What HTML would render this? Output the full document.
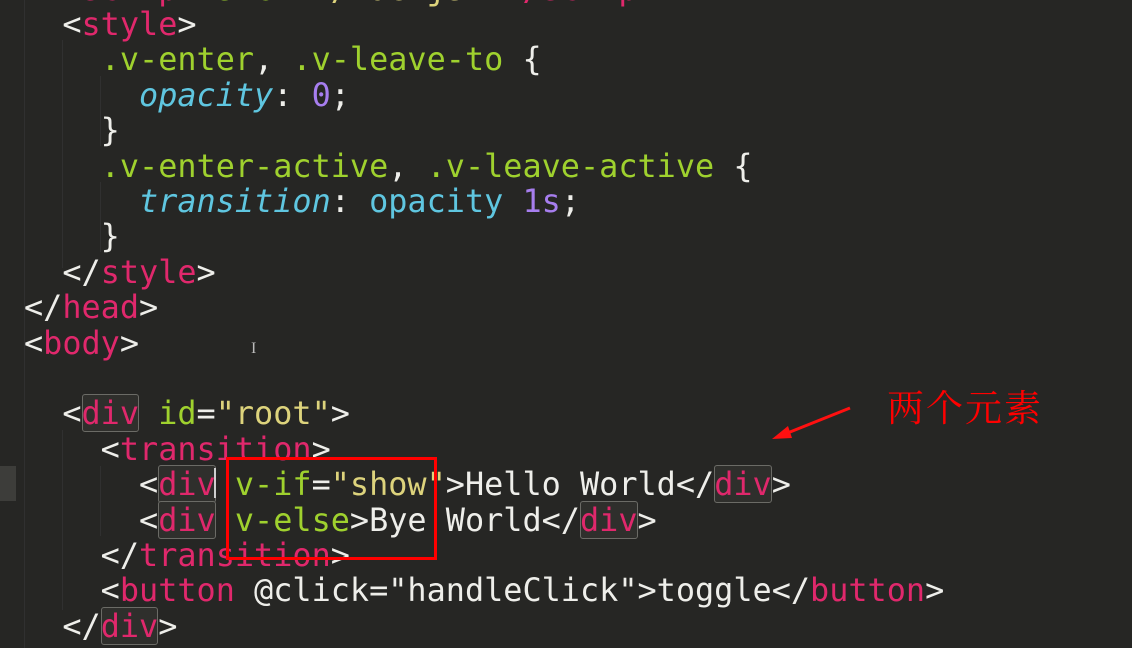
<!DOCTYPE html>
<html><head><meta charset="utf-8"><style>
html,body{margin:0;padding:0}
body{width:1132px;height:648px;overflow:hidden;background:#262624;position:relative;font-family:"DejaVu Sans Mono","Liberation Mono",monospace;}
.l{position:absolute;left:24px;height:35.4px;line-height:35.4px;font-size:31.85px;white-space:pre;color:#eeeeea;}
.p{color:#e0286c}.g{color:#9fd12e}.y{color:#ddd37c}.c{color:#5fc6e0}.i{font-style:italic}.v{color:#a77eef}.w{color:#eeeeea}
.b{outline:1.5px solid #6b6b66;outline-offset:-1px;border-radius:3px;background:#2f2f2c}
.guide{position:absolute;width:1px;background:#303030}
</style></head><body>
<div style="position:absolute;left:0;top:466px;width:16px;height:35px;background:#3d3d3a"></div>
<div class="guide" style="left:24px;top:0;height:648px"></div>
<div class="guide" style="left:62px;top:40px;height:228px"></div>
<div class="guide" style="left:100px;top:76px;height:70px"></div>
<div class="guide" style="left:100px;top:182px;height:70px"></div>
<div class="guide" style="left:62px;top:430px;height:180px"></div>
<div class="guide" style="left:100px;top:466px;height:70px"></div>
<div style="position:absolute;left:0;top:3px;width:1132px;height:645px">
<div class="l" style="top:-31.4px">  <span class="p">&lt;script</span> <span class="g">src</span>=<span class="y">"./vue.js"</span>&gt;<span class="p">&lt;/script&gt;</span></div>
<div class="l" style="top:4px">  &lt;<span class="p">style</span>&gt;</div>
<div class="l" style="top:39.4px">    <span class="g">.v-enter</span>, <span class="g">.v-leave-to</span> {</div>
<div class="l" style="top:74.8px">      <span class="c i">opacity</span>: <span class="v">0</span>;</div>
<div class="l" style="top:110.2px">    }</div>
<div class="l" style="top:145.6px">    <span class="g">.v-enter-active</span>, <span class="g">.v-leave-active</span> {</div>
<div class="l" style="top:181px">      <span class="c i">transition</span>: <span class="c">opacity</span> <span class="v">1s</span>;</div>
<div class="l" style="top:216.4px">    }</div>
<div class="l" style="top:251.8px">  &lt;/<span class="p">style</span>&gt;</div>
<div class="l" style="top:287.2px">&lt;/<span class="p">head</span>&gt;</div>
<div class="l" style="top:322.6px">&lt;<span class="p">body</span>&gt;</div>
<div class="l" style="top:393.4px">  &lt;<span class="p b">div</span> <span class="g">id</span>=<span class="y">"root"</span>&gt;</div>
<div class="l" style="top:428.8px">    &lt;<span class="p">transition</span>&gt;</div>
<div class="l" style="top:464.2px">      &lt;<span class="p b">div</span> <span class="g">v-if</span>=<span class="y">"show"</span>&gt;Hello World&lt;/<span class="p b">div</span>&gt;</div>
<div class="l" style="top:499.6px">      &lt;<span class="p b">div</span> <span class="g">v-else</span>&gt;Bye World&lt;/<span class="p b">div</span>&gt;</div>
<div class="l" style="top:535px">    &lt;/<span class="p">transition</span>&gt;</div>
<div class="l" style="top:570.4px">    &lt;<span class="p">button</span> @click=<span class="w">"handleClick"</span>&gt;toggle&lt;/<span class="p">button</span>&gt;</div>
<div class="l" style="top:605.8px">  &lt;/<span class="p b">div</span>&gt;</div>
</div>
<div style="position:absolute;left:214px;top:468px;width:2px;height:30px;background:#cfcfcf"></div>
<div style="position:absolute;left:251px;top:340px;color:#bbb;font-size:16px;font-family:'Liberation Serif',serif">I</div>

<div style="position:absolute;left:226px;top:457px;width:205px;height:97px;border:3px solid #ff0000"></div>

<svg style="position:absolute;left:0;top:0" width="1132" height="648">
<line x1="850" y1="408" x2="785" y2="434" stroke="#ff1010" stroke-width="3"/>
<polygon points="772,439 788,426 792,438" fill="#ff1010"/>
</svg>
<div style="position:absolute;left:887px;top:382px;font-size:37px;line-height:46px;color:#ff0000;font-family:'Noto Serif CJK SC','Liberation Serif',serif;letter-spacing:2px">两个元素</div>
</body></html>
